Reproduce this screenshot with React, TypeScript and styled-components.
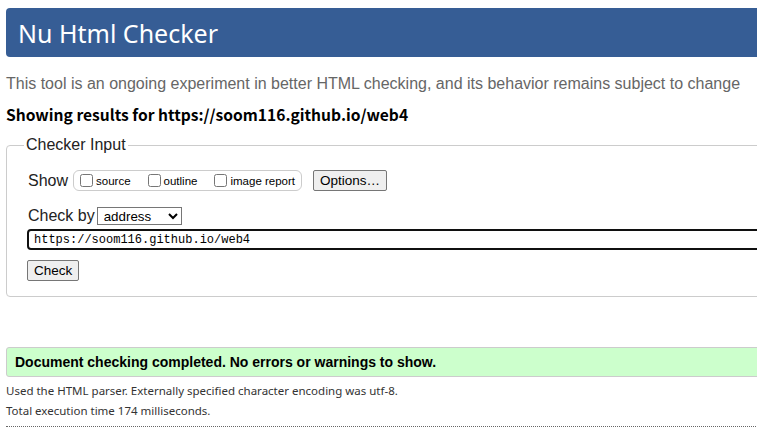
import styled, { createGlobalStyle } from 'styled-components';

const GlobalStyle = createGlobalStyle`
  html, body {
    margin: 0;
    padding: 0;
    background: #fff;
    overflow: hidden;
  }
  body {
    font-family: 'Liberation Sans', Arial, sans-serif;
    color: #000;
  }
`;

const Page = styled.div`
  width: 1000px;
  padding: 8px 0 0 6px;
  box-sizing: border-box;
`;

const Header = styled.h1`
  margin: 0;
  height: 49px;
  padding: 0 12px;
  display: flex;
  align-items: center;
  background: #365d95;
  border-radius: 4px;
  color: #fff;
  font-family: 'Noto Sans', 'Open Sans', sans-serif;
  font-weight: 400;
  font-size: 25px;
`;

const Intro = styled.p`
  margin: 17px 0 0;
  font-size: 16px;
  line-height: 20px;
  color: #666;
`;

const ResultFor = styled.p`
  margin: 10px 0 0;
  font-family: 'Noto Sans CJK KR', 'Noto Sans', sans-serif;
  font-weight: 700;
  font-size: 15.6px;
  line-height: 20px;
`;

const Fieldset = styled.fieldset`
  margin: 12px 0 0;
  padding: 8px 20px 15px 20px;
  border: 1px solid #ccc;
  border-radius: 4px;
  legend {
    padding: 0 2px;
    font-size: 16px;
    margin-left: -3px;
    color: #222;
  }
`;

const Row = styled.div<{ $top: number; $gap?: number }>`
  display: flex;
  align-items: center;
  gap: ${({ $gap = 5 }) => $gap}px;
  margin-top: ${({ $top }) => $top}px;
`;

const Label = styled.span`
  font-size: 16px;
  color: #222;
  padding-left: 1px;
`;

const ShowGroup = styled.div`
  display: flex;
  align-items: center;
  gap: 17px;
  height: 19px;
  padding: 0 6px;
  border: 1px solid #ccc;
  border-radius: 6px;
`;

const CheckLabel = styled.label`
  display: flex;
  align-items: center;
  font-size: 11.5px;
  color: #000;
  input {
    margin: 0 3px 0 0;
    width: 13px;
    height: 13px;
  }
`;

const Button = styled.button`
  font-family: 'Liberation Sans', Arial, sans-serif;
  font-size: 13.5px;
  height: 21px;
  padding: 0 6px;
  background: #efefef;
  border: 1px solid #767676;
  border-radius: 2px;
  color: #000;
`;

const OptionsButton = styled(Button)`
  margin-left: 6px;
`;

const Select = styled.select`
  font-family: 'Liberation Sans', Arial, sans-serif;
  font-size: 13.33px;
  height: 18px;
  width: 85px;
  border: 1px solid #767676;
  border-radius: 0;
  background: #fff;
  padding: 0 2px;
`;

const UrlInput = styled.input`
  display: block;
  width: 100%;
  box-sizing: border-box;
  margin-top: 4px;
  height: 21px;
  padding: 0 5px;
  border: 2px solid #101010;
  border-radius: 4px;
  font-family: 'Liberation Mono', monospace;
  font-size: 12px;
  color: #000;
  outline: none;
`;

const Status = styled.div`
  margin-top: 50px;
  height: 28px;
  display: flex;
  align-items: center;
  padding: 0 8px;
  background: #ccffcc;
  border: 1px solid #ccc;
  border-radius: 3px;
  font-weight: 700;
  font-size: 14px;
`;

const Info = styled.p<{ $top: number }>`
  margin: ${({ $top }) => $top}px 0 0;
  font-family: 'Noto Sans', sans-serif;
  font-size: 11.5px;
  line-height: 16px;
  color: #333;
`;

const Divider = styled.hr`
  margin: 7px 0 0;
  border: 0;
  border-top: 1px dotted #666;
`;

export default function App() {
  return (
    <>
      <GlobalStyle />
      <Page>
        <Header>Nu Html Checker</Header>
        <Intro>
          This tool is an ongoing experiment in better HTML checking, and its behavior remains
          subject to change
        </Intro>
        <ResultFor>Showing results for https://soom116.github.io/web4</ResultFor>
        <Fieldset>
          <legend>Checker Input</legend>
          <Row $top={8}>
            <Label>Show</Label>
            <ShowGroup>
              <CheckLabel>
                <input type="checkbox" />
                source
              </CheckLabel>
              <CheckLabel>
                <input type="checkbox" />
                outline
              </CheckLabel>
              <CheckLabel>
                <input type="checkbox" />
                image report
              </CheckLabel>
            </ShowGroup>
            <OptionsButton>Options…</OptionsButton>
          </Row>
          <Row $top={16} $gap={2}>
            <Label>Check by</Label>
            <Select defaultValue="address">
              <option value="address">address</option>
              <option value="file">file upload</option>
              <option value="text">text input</option>
            </Select>
          </Row>
          <UrlInput defaultValue="https://soom116.github.io/web4" />
          <Row $top={10}>
            <Button>Check</Button>
          </Row>
        </Fieldset>
        <Status>Document checking completed. No errors or warnings to show.</Status>
        <Info $top={6}>Used the HTML parser. Externally specified character encoding was utf-8.</Info>
        <Info $top={4}>Total execution time 174 milliseconds.</Info>
        <Divider />
      </Page>
    </>
  );
}
